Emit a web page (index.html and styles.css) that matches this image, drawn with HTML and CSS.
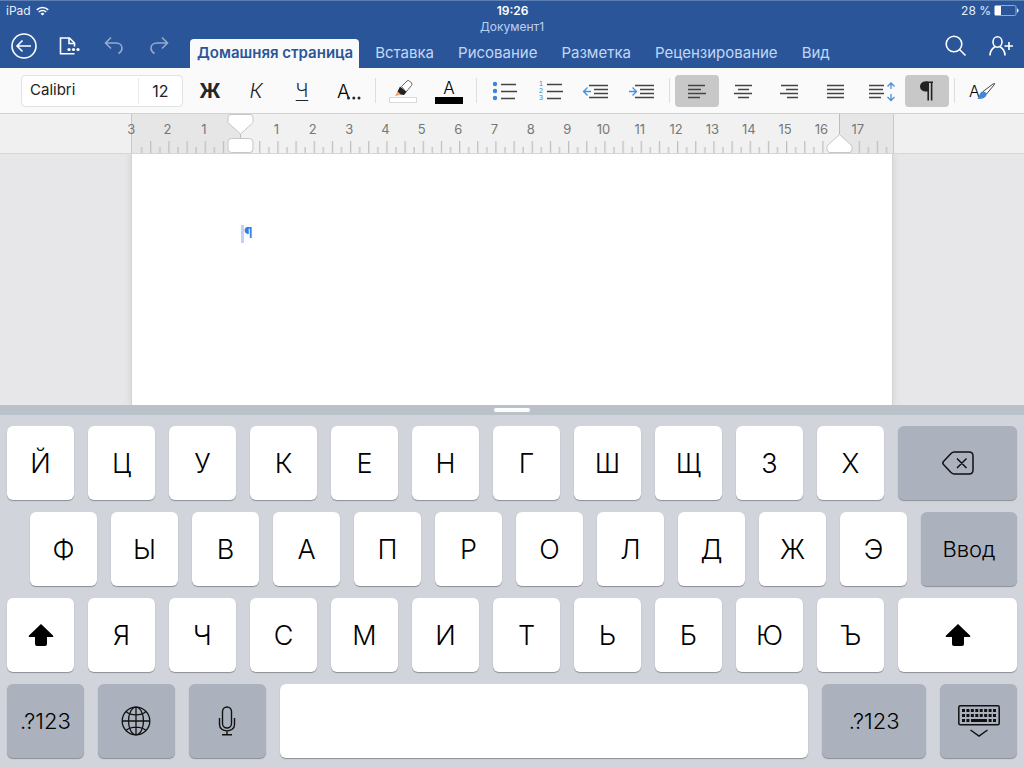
FILE: index.html
```html
<!DOCTYPE html>
<html lang="ru">
<head>
<meta charset="utf-8">
<meta name="viewport" content="width=device-width, initial-scale=1">
<title>Документ1</title>
<link rel="stylesheet" href="styles.css">
</head>
<body>
<header class="header">
  <div class="status">
    <div class="status-left">
      <span>iPad</span>
      <svg width="13" height="10" viewBox="0 0 13 10" fill="none" stroke="#fff" stroke-width="1.6"><path d="M.8 3.8a8.2 8.2 0 0 1 11.4 0M2.8 6a5.3 5.3 0 0 1 7.4 0"/><path d="M6.500 9.600 4.600 7.700a2.800 2.800 0 0 1 3.800 0z" fill="#fff" stroke="none"/></svg>
    </div>
    <strong class="clock">19:26</strong>
    <div class="status-right">
      <span>28 %</span>
      <svg width="25" height="11" viewBox="0 0 25 11"><rect x=".5" y=".5" width="21.500" height="10" rx="1.500" fill="none" stroke="#8fabd6"/><rect x="1" y="1" width="6" height="9" fill="#fff"/><path d="M23 3.500c2 .5 2 3.500 0 4z" fill="#fff"/></svg>
    </div>
  </div>
  <h1 class="doc-title">Документ1</h1>
  <div class="nav">
    <div class="nav-tools">
      <button class="nav-button" aria-label="Назад"><svg width="26" height="26" viewBox="0 0 26 26"><circle cx="13" cy="13" r="12"/><path d="M20 13H6.500M11.500 7.500 6 13l5.500 5.500"/></svg></button>
      <button class="nav-button" aria-label="Файл"><svg width="26" height="26" viewBox="0 0 26 26"><path d="M18.500 20.800H4.500V5h9l5 5v3.500M13 5v5.500h5.500"/><g fill="#fff" stroke="none"><circle cx="13" cy="16.500" r="1.600"/><circle cx="17.500" cy="16.500" r="1.600"/><circle cx="22" cy="16.500" r="1.600"/></g></svg></button>
      <button class="nav-button faded" aria-label="Отменить"><svg width="26" height="26" viewBox="0 0 26 26"><path d="M10 4.500 4.500 10l5.500 5.500M4.500 10h10.500c4 0 6 2.500 6 5.200 0 2-1.500 4-3.500 5.300"/></svg></button>
      <button class="nav-button faded" aria-label="Повторить"><svg width="26" height="26" viewBox="0 0 26 26"><path d="M16 4.500 21.500 10 16 15.500M21.500 10H11c-4 0-6 2.500-6 5.200 0 2 1.500 4 3.500 5.300"/></svg></button>
    </div>
    <nav class="tabs">
      <a class="tab active" href="#home">Домашняя страница</a>
      <a class="tab" href="#insert">Вставка</a>
      <a class="tab" href="#draw">Рисование</a>
      <a class="tab" href="#layout">Разметка</a>
      <a class="tab" href="#review">Рецензирование</a>
      <a class="tab" href="#view">Вид</a>
    </nav>
    <div class="nav-actions">
      <button class="nav-button" aria-label="Поиск"><svg width="26" height="26" viewBox="0 0 26 26"><circle cx="11" cy="11" r="7.800"/><path d="m16.500 16.500 6 6"/></svg></button>
      <button class="nav-button" aria-label="Общий доступ"><svg width="26" height="26" viewBox="0 0 26 26"><ellipse cx="9.500" cy="9" rx="4.500" ry="5.200"/><path d="M2 22.500c0-4.500 2-7 5-8.800M17 22.500c0-4.500-2-7-5-8.800M16.500 13h8.500M21 9v8"/></svg></button>
    </div>
  </div>
</header>

<div class="toolbar" role="toolbar">
  <div class="font-box">
    <button class="font-name">Calibri</button>
    <button class="font-size">12</button>
  </div>
  <button class="tool bold" aria-label="Полужирный">Ж</button>
  <button class="tool italic" aria-label="Курсив">К</button>
  <button class="tool underline" aria-label="Подчеркнутый">Ч</button>
  <button class="tool" aria-label="Формат текста"><svg class="icon" viewBox="0 0 44 32"><text x="11" y="23" font-size="19">А</text><g fill="#262626"><circle cx="22.500" cy="23" r="1.500"/><circle cx="27.800" cy="23" r="1.500"/><circle cx="33" cy="23" r="1.500"/></g></svg></button>
  <span class="divider"></span>
  <button class="tool" aria-label="Цвет выделения"><svg class="icon" viewBox="0 0 44 32"><path d="M20.500 11.500 26 6q1.300-1.200 2.500 0l2 2q1 1.200 0 2.500L25 17z" fill="#fff" stroke="#666"/><path d="m19 11.500 6.500 5.500-2.500 3-4-.5-2.500-3z" fill="#222"/><path d="m16.500 16.500 3.500 3-6 1.800z" fill="#f0a468"/><rect x="8.500" y="22.500" width="27" height="5" fill="#fff" stroke="#d9d9d9"/></svg></button>
  <button class="tool" aria-label="Цвет шрифта"><svg class="icon" viewBox="0 0 44 32"><text x="22" y="19" font-size="17" text-anchor="middle">А</text><rect x="8" y="22" width="28" height="7"/></svg></button>
  <span class="divider"></span>
  <button class="tool" aria-label="Маркеры"><svg class="icon" viewBox="0 0 44 32"><g fill="#3f85d3"><circle cx="13" cy="9" r="2.200"/><circle cx="13" cy="16" r="2.200"/><circle cx="13" cy="23" r="2.200"/></g><path class="rule" d="M19 9.500h15M19 16.500h16M19 23.500h14"/></svg></button>
  <button class="tool" aria-label="Нумерация"><svg class="icon" viewBox="0 0 44 32"><g class="digits"><text x="11" y="11">1</text><text x="11" y="18">2</text><text x="11" y="25">3</text></g><path class="rule" d="M19 9.500h15M19 16.500h16M19 23.500h14"/></svg></button>
  <button class="tool" aria-label="Уменьшить отступ"><svg class="icon" viewBox="0 0 44 32"><path class="accent" d="M17 16.500H10M13.500 12.500l-4 4 4 4"/><path class="rule" d="M15 10.500h19M20 14.500h14M20 18.500h14M15 22.500h19"/></svg></button>
  <button class="tool" aria-label="Увеличить отступ"><svg class="icon" viewBox="0 0 44 32"><path class="accent" d="M9 16.500h7M12.500 12.500l4 4-4 4"/><path class="rule" d="M15 10.500h19M20 14.500h14M20 18.500h14M15 22.500h19"/></svg></button>
  <span class="divider"></span>
  <button class="tool pressed" aria-label="По левому краю" aria-pressed="true"><svg class="icon" viewBox="0 0 44 32"><path class="rule" d="M13 10.500h17M13 14.500h13M13 18.500h18M13 22.500h12"/></svg></button>
  <button class="tool" aria-label="По центру"><svg class="icon" viewBox="0 0 44 32"><path class="rule" d="M14 10.500h17M17 14.500h11M13 18.500h18M17 22.500h11"/></svg></button>
  <button class="tool" aria-label="По правому краю"><svg class="icon" viewBox="0 0 44 32"><path class="rule" d="M14 10.500h17M19 14.500h12M13 18.500h18M20 22.500h11"/></svg></button>
  <button class="tool" aria-label="По ширине"><svg class="icon" viewBox="0 0 44 32"><path class="rule" d="M14 10.500h17M14 14.500h17M14 18.500h17M14 22.500h17"/></svg></button>
  <button class="tool" aria-label="Интервал"><svg class="icon" viewBox="0 0 44 32"><path class="rule" d="M10 10.500h15M10 14.500h14M10 18.500h15M10 22.500h12"/><path class="accent" d="M32 14V8M28.500 11.500l3.500-3.500 3.500 3.500M32 19v6M28.500 22l3.500 3.500 3.500-3.500"/></svg></button>
  <button class="tool pressed" aria-label="Непечатаемые знаки" aria-pressed="true"><svg class="icon" viewBox="0 0 44 32"><path d="M23 6.500h-3a5 5 0 0 0 0 10h3z" fill="#222"/><path d="M20 7.200h8M23.200 7v18.500M26.600 7v18.500" fill="none" stroke="#222" stroke-width="1.600"/></svg></button>
  <span class="divider"></span>
  <button class="tool" aria-label="Стили"><svg class="icon" viewBox="0 0 44 32"><text x="9" y="22" font-size="16">А</text><path d="m23 16.500 10-7.500q2.500-1.500 1.200.8L26.500 19z" fill="#fff" stroke="#444"/><path d="M22.500 16.500c2.500 0 4.500 1.500 4 3.500-1 3-5 4.500-9.500 4 3-1.500 1.500-6.500 5.500-7.500z" fill="#4088d8"/></svg></button>
</div>

<div class="ruler">
  <div class="ruler-page">
    <div class="numbers">
      <span>3</span><span>2</span><span>1</span><span></span><span>1</span><span>2</span><span>3</span><span>4</span><span>5</span><span>6</span><span>7</span><span>8</span><span>9</span><span>10</span><span>11</span><span>12</span><span>13</span><span>14</span><span>15</span><span>16</span><span>17</span>
    </div>
    <svg class="ticks" viewBox="0 0 760 12" preserveAspectRatio="none">
      <defs><pattern id="tick" width="18.143" height="12" patternUnits="userSpaceOnUse"><path d="M.6 0v12M9.670 6v6" stroke="#bdbdbd" stroke-width="1.200"/></pattern></defs>
      <rect x="8" width="748" height="12" fill="url(#tick)"/>
    </svg>
    <svg class="marker marker-left" width="27" height="39" viewBox="0 0 27 39"><path d="M13.500 20v6" stroke="#bdbdbd"/><path d="M4 .5h19q3 0 3 3v4q0 1-1 2L13.500 20 2 9.500Q1 8.500 1 7.500v-4q0-3 3-3z"/><rect x="1" y="24.500" width="25" height="14" rx="3.500"/></svg>
    <svg class="marker marker-right" width="27" height="39" viewBox="0 0 27 39"><path d="M13.500 0v21" stroke="#bdbdbd"/><path d="M13.500 20.500 25 31q1 1 1 2v2.500q0 3-3 3H4q-3 0-3-3V33q0-1 1-2z"/></svg>
  </div>
</div>

<main class="canvas">
  <article class="page"><p class="paragraph"><span class="caret"></span><span class="mark">¶</span></p></article>
</main>

<section class="keyboard" aria-label="Клавиатура">
  <div class="grip"><span class="handle"></span></div>
  <div class="keys">
    <div class="row">
      <button class="key">Й</button><button class="key">Ц</button><button class="key">У</button><button class="key">К</button><button class="key">Е</button><button class="key">Н</button><button class="key">Г</button><button class="key">Ш</button><button class="key">Щ</button><button class="key">З</button><button class="key">Х</button>
      <button class="key wide dark" aria-label="Удалить"><svg width="32" height="24" viewBox="0 0 32 24" fill="none" stroke="#111" stroke-width="1.500"><path d="M12.500 1H27q4 0 4 4v14q0 4-4 4H12.500q-2 0-3.500-1.500L1.500 13.500q-1.500-1.500 0-3L9 2.500Q10.500 1 12.500 1zM15 7.500l9.500 9.500M24.500 7.500 15 17"/></svg></button>
    </div>
    <div class="row inset">
      <button class="key">Ф</button><button class="key">Ы</button><button class="key">В</button><button class="key">А</button><button class="key">П</button><button class="key">Р</button><button class="key">О</button><button class="key">Л</button><button class="key">Д</button><button class="key">Ж</button><button class="key">Э</button>
      <button class="key enter dark">Ввод</button>
    </div>
    <div class="row">
      <button class="key" aria-label="Shift"><svg width="26" height="22" viewBox="0 0 26 22"><path d="M13 0 25 11.500q1 1.500-.5 1.500H19v7q0 2-2 2H9q-2 0-2-2v-7H1.500Q0 13 1 11.500z"/></svg></button>
      <button class="key">Я</button><button class="key">Ч</button><button class="key">С</button><button class="key">М</button><button class="key">И</button><button class="key">Т</button><button class="key">Ь</button><button class="key">Б</button><button class="key">Ю</button><button class="key">Ъ</button>
      <button class="key wide" aria-label="Shift"><svg width="26" height="22" viewBox="0 0 26 22"><path d="M13 0 25 11.500q1 1.500-.5 1.500H19v7q0 2-2 2H9q-2 0-2-2v-7H1.500Q0 13 1 11.500z"/></svg></button>
    </div>
    <div class="row">
      <button class="key small dark">.?123</button>
      <button class="key small dark" aria-label="Язык"><svg width="30" height="30" viewBox="0 0 30 30" fill="none" stroke="#111" stroke-width="1.300"><circle cx="15" cy="15" r="13.800"/><ellipse cx="15" cy="15" rx="7.500" ry="13.800"/><path d="M15 1v28M1 15h28M5 5.500c5 4.500 15 4.500 20 0M5 24.500c5-4.500 15-4.500 20 0"/></svg></button>
      <button class="key small dark" aria-label="Диктовка"><svg width="18" height="30" viewBox="0 0 18 30" fill="none" stroke="#111" stroke-width="1.400"><rect x="4.500" y="1" width="9" height="21" rx="4.500"/><path d="M1.500 12v6.500c0 8.500 15 8.500 15 0V12M9 25v4M4 28.800h10"/></svg></button>
      <button class="key space" aria-label="Пробел"></button>
      <button class="key symbols dark">.?123</button>
      <button class="key small dark" aria-label="Скрыть клавиатуру"><svg width="42" height="32" viewBox="0 0 42 32" fill="none" stroke="#111"><rect x=".8" y=".8" width="40.400" height="19" rx="1.500" stroke-width="1.500"/><path d="M4 5.500h34M4 10.500h34" stroke-width="3" stroke-dasharray="3 1.430"/><path d="M4 15.500h3M8.400 15.500h3M13 15.500h16M30.600 15.500h3M35 15.500h3" stroke-width="3"/><path d="m12.500 25 8.500 6 8.500-6" stroke-width="1.500"/></svg></button>
    </div>
  </div>
</section>
</body>
</html>
```
FILE: styles.css
```css
* { box-sizing: border-box; }

body {
  margin: 0;
  min-height: 100vh;
  display: flex;
  flex-direction: column;
  font-family: Inter, "Liberation Sans", sans-serif;
  background: #e7e7e9;
}

button {
  font: inherit;
  color: inherit;
  border: 0;
  padding: 0;
  background: none;
  display: flex;
  align-items: center;
  justify-content: center;
}

svg { display: block; flex: none; }

/* Header */
.header {
  background: #2a5699;
  color: #fff;
  border-top: 1px solid #5c80b4;
}

.status {
  display: grid;
  grid-template-columns: 1fr auto 1fr;
  align-items: center;
  height: 19px;
  padding: 0 5px 0 6px;
  font-size: 12px;
  color: #e6edf8;
}

.status-left, .status-right {
  display: flex;
  align-items: center;
  gap: 5px;
}

.status-right { justify-content: flex-end; gap: 3px; }

.clock { font-weight: 600; color: #fff; }

.doc-title {
  margin: 0;
  text-align: center;
  font-size: 12px;
  line-height: 13px;
  font-weight: 400;
  color: #b9d0f3;
}

.nav {
  display: flex;
  height: 35px;
}

.nav-tools { display: flex; gap: 19px; padding-left: 11px; }

.nav-button {
  width: 26px;
  height: 26px;
}

.nav-button svg { fill: none; stroke: #fff; stroke-width: 1.6px; }
.faded { opacity: 0.5; }

.tabs {
  display: flex;
  flex: 1;
  align-items: flex-end;
  margin-left: 18px;
}

.tab {
  height: 29px;
  line-height: 28px;
  padding: 0 12px;
  border-radius: 4px 4px 0 0;
  font-size: 15px;
  color: #c3d7f5;
  text-decoration: none;
  white-space: nowrap;
}

.tab.active {
  padding: 0 6px 0 7px;
  margin-right: 4px;
  background: #fafafa;
  color: #2a5699;
  font-weight: 600;
}

.nav-actions { display: flex; gap: 19px; padding-right: 10px; }

/* Toolbar */
.toolbar {
  display: flex;
  align-items: center;
  gap: 2px;
  height: 46px;
  padding: 0 20px 0 21px;
  background: #fafafa;
  border-bottom: 1px solid #d2d2d2;
}

.font-box {
  display: flex;
  align-items: center;
  width: 162px;
  height: 32px;
  margin-right: 3px;
  border: 1px solid #e2e2e2;
  border-radius: 4px;
  background: #fff;
  font-size: 16px;
  color: #222;
}

.font-name { flex: 1; height: 26px; padding: 0 0 3px 8px; justify-content: flex-start; font-size: 15px; }
.font-size { width: 44px; height: 26px; border-left: 1px solid #ebebeb; }

.tool {
  width: 44px;
  height: 32px;
  border-radius: 4px;
  font-size: 20px;
  color: #262626;
}

.tool.bold { font-weight: 700; }
.tool.italic { font-style: italic; font-weight: 300; }
.tool.underline { font-size: 18px; font-weight: 300; text-decoration: underline 1px; text-underline-offset: 3px; }
.tool.pressed { background: #c8c8c8; }

.icon { width: 44px; height: 32px; font-weight: 300; }
.rule { fill: none; stroke: #444; stroke-width: 1.4px; }
.accent { fill: none; stroke: #4a8fdb; stroke-width: 1.3px; }
.digits { fill: #3f85d3; font-family: "Liberation Sans", sans-serif; font-size: 7px; font-weight: 400; }

.divider {
  width: 1px;
  height: 25px;
  margin: 0 3px;
  background: #dedede;
}

/* Ruler */
.ruler {
  display: flex;
  justify-content: center;
  height: 40px;
  padding-left: 1px;
  background: #f0f0f0;
  border-bottom: 1px solid #d6d6d6;
}

.ruler-page {
  position: relative;
  display: flex;
  flex-direction: column;
  justify-content: space-between;
  width: 763px;
  border-left: 1px solid #c8c8c8;
  border-right: 1px solid #c8c8c8;
  background: linear-gradient(to right, #e6e6e6 14.3%, #f1f1f1 14.3% 93%, #e6e6e6 93%);
}

.numbers {
  display: grid;
  grid-template-columns: repeat(21, 1fr);
  margin: 7px 17px 0 -19px;
  font-size: 13px;
  line-height: 16px;
  text-align: center;
  color: #777;
}

.ticks { width: 100%; height: 12px; }

.marker { position: absolute; top: 0; fill: #fff; stroke: #c6c6c6; }
.marker-left { left: calc(100% * 3 / 21 - 14px); }
.marker-right { left: calc(100% * 19.5 / 21 - 13px); }

/* Document */
.canvas {
  flex: 1;
  display: flex;
  justify-content: center;
}

.page {
  width: 762px;
  padding: 71px 109px;
  background: #fff;
  border: solid #d4d4d6;
  border-width: 0 1px;
  box-shadow: 0 0 8px rgba(0, 0, 0, 0.1);
  clip-path: inset(0 -10px);
}

.paragraph {
  display: flex;
  margin: 0;
  font-size: 14px;
  line-height: 18px;
  color: #2f7de6;
}

.caret { width: 3px; height: 18px; background: #c0d2fa; }
.mark { line-height: 16px; font-weight: 700; }

/* Keyboard */
.keyboard { background: #d1d4da; }

.grip {
  display: flex;
  align-items: center;
  justify-content: center;
  height: 10px;
  background: #bac1c9;
}

.handle { width: 36px; height: 4px; border-radius: 2px; background: #fff; }

.keys {
  display: flex;
  flex-direction: column;
  gap: 12px;
  padding: 11px 7px 10px;
}

.row { display: flex; gap: 14px; }
.row.inset { padding-left: 23px; }

.key {
  flex: 67 1 0;
  min-width: 0;
  height: 74px;
  border-radius: 6px;
  background: #fff;
  box-shadow: 0 1px 1px #8b8e94;
  font-size: 27px;
  font-weight: 350;
  color: #000;
}

.key.dark { background: #abb1bd; font-size: 22px; }
.key.wide { flex-grow: 119; }
.key.enter { flex-grow: 96; }
.key.small { flex-grow: 77; }
.key.space { flex-grow: 529; }
.key.symbols { flex-grow: 104; }
```
